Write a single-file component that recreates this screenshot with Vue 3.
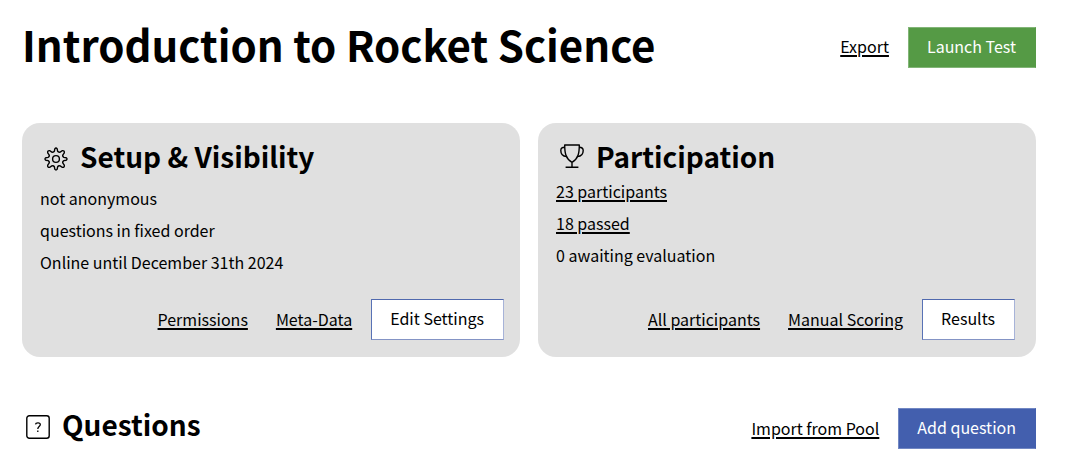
<script setup>
const cards = [
  {
    id: 'setup',
    title: 'Setup & Visibility',
    facts: [
      { text: 'not anonymous' },
      { text: 'questions in fixed order' },
      { text: 'Online until December 31th 2024' },
    ],
    links: ['Permissions', 'Meta-Data'],
    action: 'Edit Settings',
  },
  {
    id: 'participation',
    title: 'Participation',
    facts: [
      { text: '23 participants', link: true },
      { text: '18 passed', link: true },
      { text: '0 awaiting evaluation' },
    ],
    links: ['All participants', 'Manual Scoring'],
    action: 'Results',
  },
]
</script>

<template>
  <main class="page">
    <header class="bar">
      <h1>Introduction to Rocket Science</h1>
      <div class="actions">
        <a href="#">Export</a>
        <button type="button" class="btn launch">Launch Test</button>
      </div>
    </header>

    <div class="cards">
      <section v-for="card in cards" :key="card.id" class="card" :class="card.id">
        <div class="heading">
          <svg v-if="card.id === 'setup'" class="icon" viewBox="0 0 24 24" aria-hidden="true">
            <path d="M10.4 4.1 L10.8 1.8 Q12 .2 13.2 1.8 L13.6 4.1 Q14.3 5.5 16.2 5.1 L18.1 3.7 Q20.7 3.3 20.3 5.9 L18.9 7.8 Q18.2 9.5 19.9 10.4 L22.2 10.8 Q23.8 12 22.2 13.2 L19.9 13.6 Q18.2 14.5 18.9 16.2 L20.3 18.1 Q20.7 20.7 18.1 20.3 L16.2 18.9 Q14.3 18.5 13.6 19.9 L13.2 22.2 Q12 23.8 10.8 22.2 L10.4 19.9 Q9.7 18.5 7.8 18.9 L5.9 20.3 Q3.3 20.7 3.7 18.1 L5.1 16.2 Q5.8 14.5 4.1 13.6 L1.8 13.2 Q.2 12 1.8 10.8 L4.1 10.4 Q5.8 9.5 5.1 7.8 L3.7 5.9 Q3.3 3.3 5.9 3.7 L7.8 5.1 Q9.7 5.5 10.4 4.1 Z" />
            <circle cx="12" cy="12" r="3.4" />
          </svg>
          <svg v-else class="icon" viewBox="0 0 24 24" aria-hidden="true">
            <path d="M4.7 1 H19.3 C19.3 9 18.4 14.6 12 18.4 C5.6 14.6 4.7 9 4.7 1 Z M12 18.2 V23 M5.6 23.2 H18.4" />
            <path d="M4.8 3.2 C2.5 3.2 .8 3.8 .8 6.5 C.8 9.8 2.5 12.2 6.5 12.6 M19.2 3.2 C21.5 3.2 23.2 3.8 23.2 6.5 C23.2 9.8 21.5 12.2 17.5 12.6" />
          </svg>
          <h2>{{ card.title }}</h2>
        </div>
        <ul class="facts">
          <li v-for="fact in card.facts" :key="fact.text">
            <a v-if="fact.link" href="#">{{ fact.text }}</a>
            <template v-else>{{ fact.text }}</template>
          </li>
        </ul>
        <div class="actions">
          <a v-for="link in card.links" :key="link" href="#">{{ link }}</a>
          <button type="button" class="btn plain">{{ card.action }}</button>
        </div>
      </section>
    </div>

    <section class="bar questions">
      <div class="heading">
        <svg class="icon" viewBox="0 0 24 24" aria-hidden="true">
          <rect x=".8" y=".8" width="22.4" height="22.4" rx="2.5" />
          <path class="mark" d="M9.5 9.4 C9.7 7.5 14.3 7.1 14.3 9.6 C14.3 11.6 11.8 11.6 11.8 14 M11.8 15.4 V16.9" />
        </svg>
        <h2>Questions</h2>
      </div>
      <div class="actions">
        <a href="#">Import from Pool</a>
        <button type="button" class="btn add">Add question</button>
      </div>
    </section>
  </main>
</template>

<style>
body {
  background: #fff;
}
</style>

<style scoped>
.page {
  padding: 20px 32px 20px 22px;
  color: #000;
  font: 16px/24px "Noto Sans CJK SC", "Noto Sans", sans-serif;
}

h1,
h2 {
  margin: 0;
  font-weight: 700;
}

h1 {
  padding-bottom: 6px;
  font-size: 42px;
  line-height: 48px;
}

h2 {
  font-size: 28px;
  line-height: 34px;
}

a {
  color: inherit;
  text-decoration: underline;
  text-decoration-thickness: 2px;
  text-underline-offset: 2px;
}

.bar,
.actions {
  display: flex;
  align-items: center;
}

.bar {
  justify-content: space-between;
}

.actions {
  gap: 28px;
}

.actions a {
  padding-bottom: 2px;
}

.btn {
  margin: 0 0 0 -9px;
  padding: 7px 19px 9px 18px;
  border: 1px solid;
  border-radius: 0;
  color: #fff;
  font: inherit;
  line-height: 23px;
  cursor: pointer;
}

.launch {
  border-color: #82b577 #559a45 #82b577 #82b577;
  background: #559a45;
}

.add {
  border-color: #7187c3 #435fae #7187c3 #7187c3;
  background: #435fae;
}

.plain {
  border-color: #5069ae #a7b3d8 #8494c5 #5872b5;
  background: #fff;
  color: #000;
}

.icon {
  width: 24px;
  height: 24px;
  margin-top: 8px;
  flex: none;
  fill: none;
  stroke: #000;
  stroke-width: 1.4;
  stroke-linejoin: round;
}

.participation .icon {
  margin-top: 5px;
}

.mark {
  stroke-width: 1.3;
}

.heading {
  display: flex;
  align-items: flex-start;
  gap: 12px;
  padding: 0 0 6px 4px;
}

.cards {
  display: grid;
  grid-template-columns: 1fr 1fr;
  gap: 18px;
  margin-top: 49px;
}

.card {
  display: flex;
  flex-direction: column;
  min-height: 201px;
  padding: 16px 16px 17px 18px;
  border-radius: 18px;
  background: #e0e0e0;
}

.participation {
  padding-right: 21px;
}

.card .actions {
  justify-content: flex-end;
  margin-top: auto;
}

.facts {
  display: grid;
  gap: 8px;
  margin: 7px 0 0;
  padding: 0;
  list-style: none;
}

.participation .facts {
  margin-top: 0;
}

.questions {
  margin-top: 51px;
}

.questions .heading {
  padding-bottom: 10px;
}

.questions h2 {
  line-height: 30px;
}

.questions .icon {
  margin-top: 6px;
}
</style>
